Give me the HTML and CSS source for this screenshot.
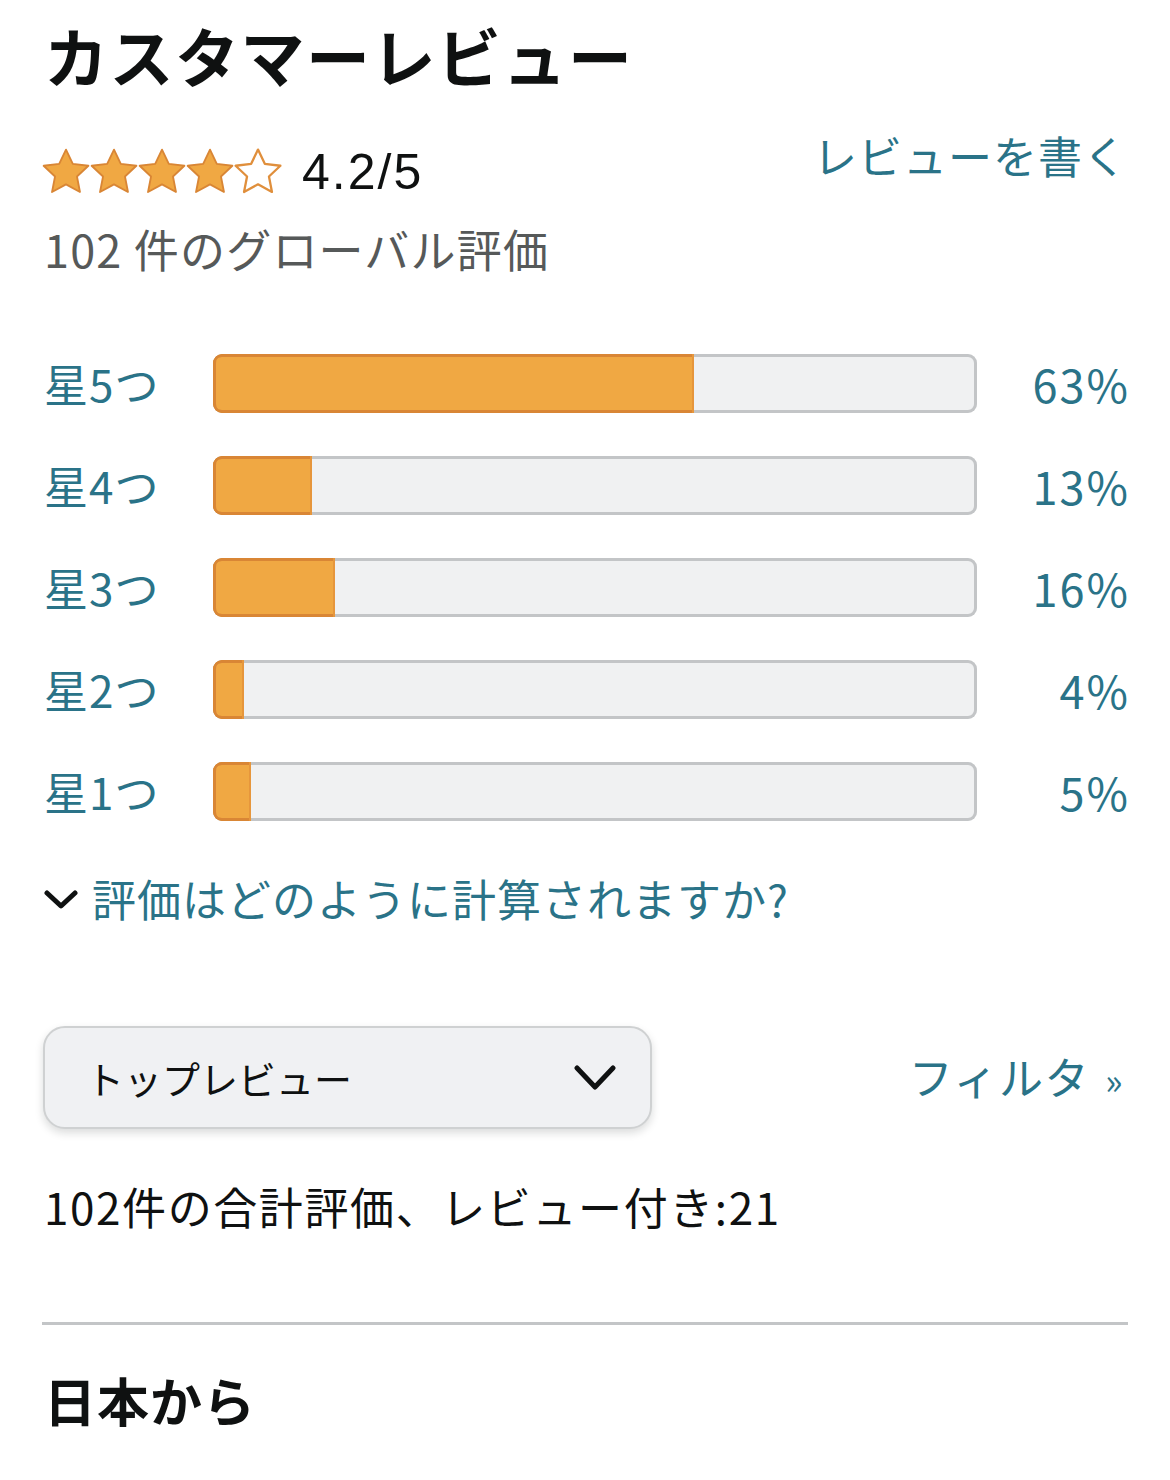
FILE: index.html
```html
<!DOCTYPE html>
<html lang="ja">
<head>
<meta charset="utf-8">
<title>カスタマーレビュー</title>
<link rel="stylesheet" href="styles.css">
</head>
<body>
<div class="page">
  <h1 class="title">カスタマーレビュー</h1>

  <div class="rating-row">
    <div class="rating-left">
      <div class="stars">
        <svg class="star" viewBox="1.6 1.6 20.8 20.8"><path class="full" d="M12 2.3l2.95 6.15 6.75.85-4.95 4.65 1.3 6.7L12 17.35 5.95 20.65l1.3-6.7L2.3 9.3l6.75-.85z"/></svg>
        <svg class="star" viewBox="1.6 1.6 20.8 20.8"><path class="full" d="M12 2.3l2.95 6.15 6.75.85-4.95 4.65 1.3 6.7L12 17.35 5.95 20.65l1.3-6.7L2.3 9.3l6.75-.85z"/></svg>
        <svg class="star" viewBox="1.6 1.6 20.8 20.8"><path class="full" d="M12 2.3l2.95 6.15 6.75.85-4.95 4.65 1.3 6.7L12 17.35 5.95 20.65l1.3-6.7L2.3 9.3l6.75-.85z"/></svg>
        <svg class="star" viewBox="1.6 1.6 20.8 20.8"><path class="full" d="M12 2.3l2.95 6.15 6.75.85-4.95 4.65 1.3 6.7L12 17.35 5.95 20.65l1.3-6.7L2.3 9.3l6.75-.85z"/></svg>
        <svg class="star" viewBox="1.6 1.6 20.8 20.8"><path class="empty" d="M12 2.3l2.95 6.15 6.75.85-4.95 4.65 1.3 6.7L12 17.35 5.95 20.65l1.3-6.7L2.3 9.3l6.75-.85z"/></svg>
      </div>
      <span class="score">4.2/5</span>
    </div>
    <a class="link write-link" href="#">レビューを書く</a>
  </div>

  <p class="global-count">102 件のグローバル評価</p>

  <div class="histogram">
    <div class="hist-row">
      <a class="link hist-label" href="#">星5つ</a>
      <div class="bar"><div class="fill" style="width:63%"></div></div>
      <a class="link hist-pct" href="#">63%</a>
    </div>
    <div class="hist-row">
      <a class="link hist-label" href="#">星4つ</a>
      <div class="bar"><div class="fill" style="width:13%"></div></div>
      <a class="link hist-pct" href="#">13%</a>
    </div>
    <div class="hist-row">
      <a class="link hist-label" href="#">星3つ</a>
      <div class="bar"><div class="fill" style="width:16%"></div></div>
      <a class="link hist-pct" href="#">16%</a>
    </div>
    <div class="hist-row">
      <a class="link hist-label" href="#">星2つ</a>
      <div class="bar"><div class="fill" style="width:4%"></div></div>
      <a class="link hist-pct" href="#">4%</a>
    </div>
    <div class="hist-row">
      <a class="link hist-label" href="#">星1つ</a>
      <div class="bar"><div class="fill" style="width:5%"></div></div>
      <a class="link hist-pct" href="#">5%</a>
    </div>
  </div>

  <div class="how-row">
    <svg class="how-chevron" viewBox="0 0 34 22"><polyline points="3,4 17,17 31,4"/></svg>
    <a class="link how-link" href="#">評価はどのように計算されますか?</a>
  </div>

  <div class="sort-row">
    <div class="dropdown">
      <span class="dropdown-text">トップレビュー</span>
      <svg class="dropdown-chevron" viewBox="0 0 42 28"><polyline points="3,4 21,23 39,4"/></svg>
    </div>
    <a class="link filter-link" href="#">フィルタ <span class="raquo">»</span></a>
  </div>

  <p class="total-count">102件の合計評価、レビュー付き:21</p>

  <hr class="divider">

  <h2 class="subtitle">日本から</h2>
</div>
</body>
</html>
```

FILE: styles.css
```css
html, body {
  margin: 0;
  padding: 0;
  background: #ffffff;
}

body {
  font-family: "Noto Sans CJK JP", "Noto Sans", sans-serif;
  color: #0f1111;
}

.page {
  padding: 0 42px 0 44px;
}

.title {
  margin: 16px 0 0;
  font-size: 64px;
  line-height: 77px;
  font-weight: 700;
  letter-spacing: 1.5px;
  color: #0f1111;
}

.link {
  color: #2a7388;
  text-decoration: none;
}

.rating-row {
  margin-top: 49px;
  display: flex;
  justify-content: space-between;
  align-items: flex-start;
  height: 60px;
}

.rating-left {
  display: flex;
  align-items: center;
  height: 60px;
}

.stars {
  display: flex;
  margin-left: -2px;
}

.star {
  width: 48px;
  height: 48px;
  display: block;
}

.star .full {
  fill: #f0a843;
  stroke: #d98635;
  stroke-width: 0.8;
  stroke-linejoin: round;
}

.star .empty {
  fill: #ffffff;
  stroke: #e08f3c;
  stroke-width: 1;
  stroke-linejoin: round;
}

.score {
  margin-left: 20px;
  font-family: "Liberation Sans", "Noto Sans CJK JP", sans-serif;
  font-size: 50px;
  line-height: 60px;
  letter-spacing: 2px;
  color: #0f1111;
}

.write-link {
  font-size: 44px;
  line-height: 30px;
  margin-top: -2px;
  letter-spacing: 1px;
}

.global-count {
  margin: 17px 0 0;
  font-size: 45px;
  line-height: 60px;
  letter-spacing: 1.2px;
  color: #565959;
}

.histogram {
  margin-top: 75px;
  display: flex;
  flex-direction: column;
  gap: 43px;
}

.hist-row {
  display: flex;
  align-items: center;
  height: 59px;
}

.hist-label {
  width: 169px;
  flex: none;
  font-size: 44px;
  line-height: 59px;
  letter-spacing: 1px;
}

.bar {
  flex: 1;
  height: 59px;
  box-sizing: border-box;
  background: #f0f1f2;
  box-shadow: inset 0 0 0 3px #c3c5c7;
  border-radius: 9px;
  overflow: hidden;
}

.fill {
  height: 100%;
  box-sizing: border-box;
  background: #f0a843;
  border-right: 2px solid #e6963c;
  border-radius: 9px 0 0 9px;
  box-shadow: inset 3px 0 0 #d98635, inset 0 3px 0 #d98635, inset 0 -3px 0 #d98635;
}

.hist-pct {
  width: 153px;
  flex: none;
  text-align: right;
  font-size: 45px;
  line-height: 59px;
  letter-spacing: 2px;
  margin-right: -2px;
}

.how-row {
  margin-top: 47px;
  display: flex;
  align-items: center;
  height: 60px;
}

.how-chevron {
  width: 34px;
  height: 22px;
  margin-right: 14px;
  margin-top: 4px;
}

.how-chevron polyline,
.dropdown-chevron polyline {
  fill: none;
  stroke: #0f1111;
  stroke-width: 5;
  stroke-linecap: round;
  stroke-linejoin: round;
}

.how-link {
  font-size: 44px;
  line-height: 60px;
  letter-spacing: 1px;
}

.sort-row {
  margin-top: 98px;
  display: flex;
  align-items: center;
  justify-content: space-between;
}

.dropdown {
  width: 609px;
  height: 103px;
  box-sizing: border-box;
  background: #f0f1f3;
  border: 2px solid #cfd1d2;
  border-radius: 22px;
  box-shadow: 0 4px 8px rgba(15, 17, 17, 0.15);
  display: flex;
  align-items: center;
  justify-content: space-between;
  padding: 0 34px 0 41px;
  margin-left: -1px;
}

.dropdown-text {
  font-size: 38px;
  line-height: 50px;
  color: #0f1111;
}

.dropdown-chevron {
  width: 42px;
  height: 28px;
}

.filter-link {
  font-size: 44px;
  line-height: 60px;
  letter-spacing: 1.5px;
  margin-right: 4px;
}

.raquo {
  font-size: 36px;
  margin-left: 4px;
}

.total-count {
  margin: 47px 0 0;
  font-size: 44px;
  line-height: 60px;
  letter-spacing: 1.6px;
  color: #0f1111;
}

.divider {
  margin: 86px 0 0 -2px;
  border: none;
  height: 3px;
  background: #c3c5c7;
}

.subtitle {
  margin: 44px 0 0;
  font-size: 52px;
  line-height: 62px;
  font-weight: 700;
  letter-spacing: 1px;
  color: #0f1111;
}
```
